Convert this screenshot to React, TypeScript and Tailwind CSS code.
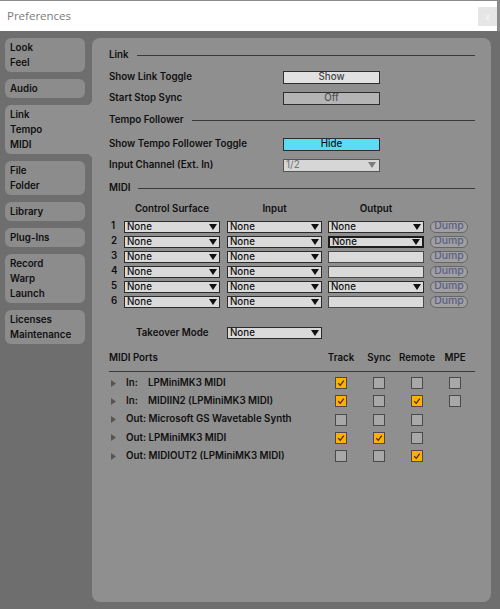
import React from 'react'

const TABS = [
  { lines: ['Look', 'Feel'] },
  { lines: ['Audio'] },
  { lines: ['Link', 'Tempo', 'MIDI'], active: true },
  { lines: ['File', 'Folder'] },
  { lines: ['Library'] },
  { lines: ['Plug-Ins'] },
  { lines: ['Record', 'Warp', 'Launch'] },
  { lines: ['Licenses', 'Maintenance'] },
]

const SURFACES = [
  { output: 'None' },
  { output: 'None', focused: true },
  { output: null },
  { output: null },
  { output: 'None' },
  { output: null },
]

const PORTS = [
  { dir: 'In:', name: 'LPMiniMK3 MIDI', flags: [true, false, false, false] },
  { dir: 'In:', name: 'MIDIIN2 (LPMiniMK3 MIDI)', flags: [true, false, true, false] },
  { dir: 'Out:', name: 'Microsoft GS Wavetable Synth', flags: [false, false, false] },
  { dir: 'Out:', name: 'LPMiniMK3 MIDI', flags: [true, true, false] },
  { dir: 'Out:', name: 'MIDIOUT2 (LPMiniMK3 MIDI)', flags: [false, false, true] },
]

const Arrow = ({ color = '#111' }: { color?: string }) => (
  <svg width="8" height="6" viewBox="0 0 8 6">
    <polygon points="0,0 8,0 4,6" fill={color} />
  </svg>
)

const Expander = () => (
  <svg width="5" height="7" viewBox="0 0 5 7">
    <polygon points="0,0 5,3.5 0,7" fill="#555" />
  </svg>
)

function Section({ title }: { title: string }) {
  return (
    <div className="flex items-center h-full">
      <span>{title}</span>
      <div className="flex-1 h-px bg-[#3a3a3a] ml-[8px]" />
    </div>
  )
}

function Select({ value, focused, width }: { value: string | null; focused?: boolean; width: string }) {
  return (
    <div
      className={`${width} h-[12px] flex items-center justify-between bg-[#dadada] pl-[2px] pr-[2px] leading-none ${
        focused ? 'border-2 border-[#1c1c1c]' : value ? 'border border-[#2a2a2a]' : 'border border-[#4a4a4a]'
      }`}
    >
      <span className="text-[#111] font-medium">{value}</span>
      {value && <Arrow />}
    </div>
  )
}

function Toggle({ label, tone }: { label: string; tone: 'on' | 'off' | 'cyan' }) {
  const cls =
    tone === 'cyan'
      ? 'bg-[#5adcf4] text-[#111]'
      : tone === 'on'
        ? 'bg-[#e1e1e1] text-[#444]'
        : 'bg-[#b4b4b4] text-[#555]'
  return (
    <div className={`w-[97px] h-[13px] border border-[#2e2e2e] flex items-center justify-center leading-none font-medium ${cls}`}>
      {label}
    </div>
  )
}

function Check({ on }: { on: boolean }) {
  return (
    <div
      className={`w-[12px] h-[12px] border border-[#4a4a4a] flex items-center justify-center ${
        on ? 'bg-[#ffb000]' : 'bg-[#a8a8a8]'
      }`}
    >
      {on && (
        <svg width="10" height="10" viewBox="0 0 10 10">
          <path d="M2.2 5.2 L4.2 7.3 L7.8 2.6" stroke="#3a2a00" strokeWidth="1.2" fill="none" />
        </svg>
      )}
    </div>
  )
}

export default function App() {
  return (
    <div className="w-[500px] h-[609px] bg-[#6e6e6e] flex flex-col overflow-hidden font-['Inter',sans-serif] font-semibold text-[9.75px] text-[#101010]">

      {/* title bar */}
      <div className="h-[31px] bg-white border-t border-[#8a8a8a] border-r-[3px] border-r-[#8a8a8a] flex items-center justify-between pl-[7px] shrink-0">
        <span className="font-['Open_Sans',sans-serif] font-normal text-[11.5px] text-[#7b7b7b]">Preferences</span>
        <div className="w-[19px] h-[19px] bg-[#e6e6e6] flex items-center justify-center text-[#f8f8f8] text-[9px] font-normal leading-none">
          x
        </div>
      </div>

      <div className="flex flex-1 py-[7px]">

        {/* tab column */}
        <div className="w-[92px] pl-[5px] flex flex-col gap-[7px]">
          {TABS.map((tab) => (
            <div
              key={tab.lines[0]}
              className={`relative py-[2px] pl-[5px] leading-[15px] ${
                tab.active ? 'w-[87px] bg-[#8f8f8f] rounded-l-[6px]' : 'w-[80px] bg-[#8c8c8c] rounded-[6px]'
              }`}
            >
              {tab.lines.map((l) => (
                <div key={l}>{l}</div>
              ))}
              {tab.active && (
                <>
                  <div className="absolute right-0 -top-[6px] w-[6px] h-[6px] bg-[radial-gradient(circle_at_0_0,#6e6e6e_6px,#8f8f8f_6.5px)]" />
                  <div className="absolute right-0 -bottom-[6px] w-[6px] h-[6px] bg-[radial-gradient(circle_at_0_100%,#6e6e6e_6px,#8f8f8f_6.5px)]" />
                </>
              )}
            </div>
          ))}
        </div>

        {/* settings panel */}
        <div className="flex-1 mr-[9px] bg-[#8f8f8f] rounded-[8px] pt-[7px] pl-[17px] pr-[16px]">

          <div className="h-[20px]"><Section title="Link" /></div>
          <div className="h-[24px] flex items-center">
            <span className="w-[174px]">Show Link Toggle</span>
            <Toggle label="Show" tone="on" />
          </div>
          <div className="h-[18px] flex items-center">
            <span className="w-[174px]">Start Stop Sync</span>
            <Toggle label="Off" tone="off" />
          </div>

          <div className="h-[26px]"><Section title="Tempo Follower" /></div>
          <div className="h-[22px] flex items-center">
            <span className="w-[174px]">Show Tempo Follower Toggle</span>
            <Toggle label="Hide" tone="cyan" />
          </div>
          <div className="h-[20px] flex items-center">
            <span className="w-[174px]">Input Channel (Ext. In)</span>
            <div className="w-[97px] h-[13px] border border-[#555] bg-[#d6d6d6] flex items-center justify-between pl-[2px] pr-[3px] leading-none font-medium text-[#7c7c7c]">
              <span>1/2</span>
              <Arrow color="#7c7c7c" />
            </div>
          </div>

          <div className="h-[26px]"><Section title="MIDI" /></div>
          <div className="h-[16px] flex items-center">
            <span className="w-[15px]" />
            <span className="w-[96px] text-center">Control Surface</span>
            <span className="w-[95px] ml-[7px] text-center">Input</span>
            <span className="w-[96px] ml-[6px] text-center">Output</span>
          </div>

          <div className="mt-[2px]">
            {SURFACES.map((row, i) => (
              <div key={i} className="h-[15px] flex items-center">
                <span className="w-[15px] pl-[2px]">{i + 1}</span>
                <Select value="None" width="w-[96px]" />
                <div className="ml-[7px]"><Select value="None" width="w-[95px]" /></div>
                <div className="ml-[6px]"><Select value={row.output} focused={row.focused} width="w-[96px]" /></div>
                <div className="ml-[6px] w-[38px] h-[12px] rounded-full border border-[#666] bg-[#a0a0a0] flex items-center justify-center leading-none font-medium text-[10.5px] text-[#5e5e88]">
                  Dump
                </div>
              </div>
            ))}
          </div>

          <div className="h-[20px] mt-[14px] flex items-center">
            <span className="w-[118px] pl-[27px]">Takeover Mode</span>
            <Select value="None" width="w-[95px]" />
          </div>

          <div className="h-[20px] mt-[5px] flex items-center">
            <span className="w-[213px]">MIDI Ports</span>
            <span className="w-[38px] text-center">Track</span>
            <span className="w-[38px] text-center">Sync</span>
            <span className="w-[38px] text-center">Remote</span>
            <span className="w-[38px] text-center">MPE</span>
          </div>
          <div className="h-px bg-[#3a3a3a] mt-[3px] w-[366px]" />

          <div className="mt-[2px]">
            {PORTS.map((p) => (
              <div key={p.dir + p.name} className="h-[18.25px] flex items-center">
                <div className="w-[213px] flex items-center">
                  <span className="w-[17px] pl-[2px] flex"><Expander /></span>
                  {p.dir === 'In:' ? (
                    <>
                      <span className="w-[22px]">In:</span>
                      <span>{p.name}</span>
                    </>
                  ) : (
                    <span>Out: {p.name}</span>
                  )}
                </div>
                {p.flags.map((f, j) => (
                  <div key={j} className="w-[38px] flex justify-center">
                    <Check on={f} />
                  </div>
                ))}
              </div>
            ))}
          </div>

        </div>
      </div>
    </div>
  )
}
